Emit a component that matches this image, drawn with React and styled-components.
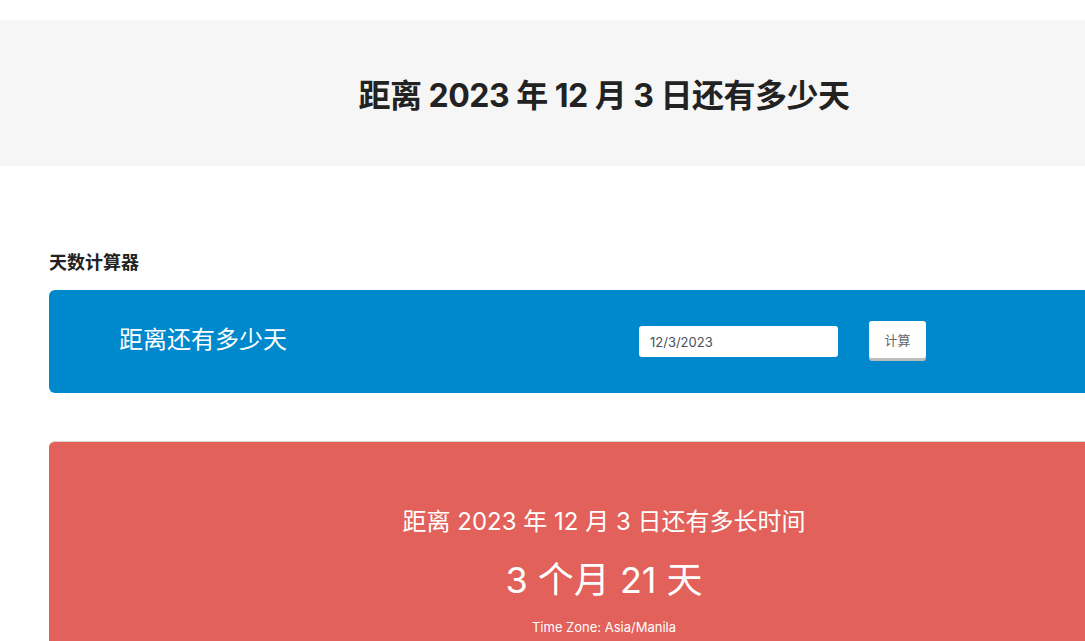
import React from "react";
import styled, { createGlobalStyle } from "styled-components";

const GlobalStyle = createGlobalStyle`
  html, body {
    margin: 0;
    padding: 0;
    overflow-x: hidden;
    background: #fff;
  }
  body {
    font-family: Inter, "Noto Sans CJK SC", sans-serif;
    color: #222;
  }
`;

const Page = styled.div`
  width: 1208px;
  padding-top: 20px;
`;

const Hero = styled.header`
  background: #f6f6f6;
  height: 146px;
  display: flex;
  align-items: center;
  justify-content: center;
`;

const HeroTitle = styled.h1`
  margin: 0;
  font-size: 32px;
  font-weight: 700;
  color: #222;
  letter-spacing: -0.5px;
`;

const Container = styled.main`
  padding: 84px 49px 0;
`;

const SectionLabel = styled.h2`
  margin: 0 0 14px;
  font-size: 18px;
  font-weight: 700;
  color: #222;
  line-height: 26px;
`;

const Calculator = styled.section`
  background: #0088cc;
  border-radius: 6px;
  height: 103px;
  display: grid;
  grid-template-columns: 520px 230px auto;
  align-items: center;
  padding-left: 70px;
`;

const CalcTitle = styled.div`
  color: #fff;
  font-size: 24px;
  margin-top: -9px;
`;

const DateInput = styled.input`
  width: 199px;
  height: 31px;
  box-sizing: border-box;
  border: none;
  border-radius: 3px;
  padding: 0 11px;
  font-family: inherit;
  font-size: 13px;
  color: #4a5060;
  background: #fff;
`;

const CalcButton = styled.button`
  width: 57px;
  height: 37px;
  border: none;
  border-radius: 3px;
  background: #fff;
  box-shadow: 0 3px 0 #bdbdbd;
  font-family: inherit;
  font-size: 13px;
  color: #666;
  margin-top: -4px;
`;

const Result = styled.section`
  margin-top: 48px;
  background: #e2615a;
  border-top: 1px solid #d8d8d8;
  border-radius: 6px 6px 0 0;
  height: 220px;
  display: flex;
  flex-direction: column;
  align-items: center;
  padding-top: 62px;
  box-sizing: border-box;
  color: #fff;
`;

const ResultTitle = styled.div`
  font-size: 24px;
  line-height: 36px;
`;

const ResultValue = styled.div`
  font-size: 36px;
  line-height: 48px;
  margin-top: 16px;
`;

const TimeZone = styled.div`
  font-size: 13px;
  margin-top: 15px;
`;

const App = () => {
  return (
    <>
      <GlobalStyle />
      <Page>
        <Hero>
          <HeroTitle>距离 2023 年 12 月 3 日还有多少天</HeroTitle>
        </Hero>
        <Container>
          <SectionLabel>天数计算器</SectionLabel>
          <Calculator>
            <CalcTitle>距离还有多少天</CalcTitle>
            <DateInput defaultValue="12/3/2023" />
            <div>
              <CalcButton>计算</CalcButton>
            </div>
          </Calculator>
          <Result>
            <ResultTitle>距离 2023 年 12 月 3 日还有多长时间</ResultTitle>
            <ResultValue>3 个月 21 天</ResultValue>
            <TimeZone>Time Zone: Asia/Manila</TimeZone>
          </Result>
        </Container>
      </Page>
    </>
  );
};

export default App;
